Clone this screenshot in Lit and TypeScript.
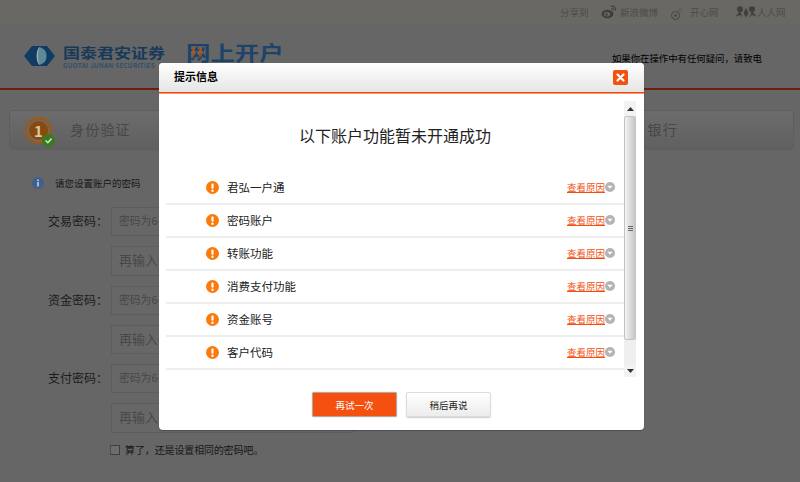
import { LitElement, html, css } from "lit";
import { customElement } from "lit/decorators.js";

const ROWS = ["君弘一户通", "密码账户", "转账功能", "消费支付功能", "资金账号", "客户代码"];
const FIELDS = ["交易密码：", "资金密码：", "支付密码："];

@customElement("app-root")
export class AppRoot extends LitElement {
  static styles = css`
    :host { display: block; width: 800px; height: 482px; position: relative; overflow: hidden; background: #666;
      font-family: "Noto Sans CJK SC", "Liberation Sans", sans-serif; color: #000; }
    .top { height: 24px; background: #6a6863; display: flex; align-items: center; font-size: 9.5px; color: #4c4c4a; padding-left: 560px; }
    .top span { white-space: nowrap; }
    .top svg { display: block; flex: none; }
    .share { width: 41px; }
    .wb { margin-right: 3px; }
    .wbt { width: 51px; }
    .kx { margin-right: 8px; margin-top: 3px; }
    .kxt { width: 45px; }
    .head { border-bottom: 2px solid #6e1d0e; display: flex; height: 63px; margin-top: 1px; }
    .logo { margin: 21px 0 0 24px; flex: none; }
    .brand { margin: 20px 0 0 8px; width: 123px; flex: none; color: #17395a; }
    .brand b { display: block; font-size: 13.6px; line-height: 15px; font-weight: 700; white-space: nowrap; transform: scaleX(1.25); transform-origin: left center; }
    .brand i { display: block; font-style: normal; font-size: 6.3px; line-height: 7px; margin-top: 2px; font-weight: 700; white-space: nowrap; letter-spacing: .3px; color: #2f4f6b; }
    .kaihu { margin: 15px 0 0 0; font-size: 20px; line-height: 26px; font-weight: 700; color: #1d4369; flex: none; position: relative; white-space: nowrap; transform: scaleX(1.22); transform-origin: left center; }
    .bolt { position: absolute; left: 3px; top: 4px; }
    .help { margin: 27px 0 0 auto; padding-right: 38px; font-size: 9.4px; line-height: 12px; white-space: nowrap; }
    .steps { margin: 20px 6px 0 9px; height: 40px; box-sizing: border-box; border: 1px solid #5e5e5e; border-radius: 4px; background: linear-gradient(#6c6c6c, #606060); display: flex; align-items: center; justify-content: space-between; padding: 0 115px 2px 15px; }
    .step { display: flex; align-items: center; font-size: 14px; letter-spacing: 1.2px; color: #474747; white-space: nowrap; }
    .num { width: 23px; height: 23px; border: 2px solid #a7560c; border-radius: 50%; background: #8a4a0c; display: flex; align-items: center; justify-content: center; color: #d6c8a8; font-size: 15px; font-weight: 700; margin-right: 18px; position: relative; letter-spacing: 0; box-shadow: inset 0 0 0 2px #6b6b6b; margin-top: 2px; }
    .ok { position: absolute; right: -5px; bottom: -5px; }
    .info { display: flex; align-items: center; font-size: 9.5px; line-height: 12px; margin: 27px 0 0 32px; color: #161616; white-space: nowrap; }
    .info svg { margin-right: 11px; }
    .form { margin: 18px 0 0 48px; display: grid; grid-template-columns: 63px 242px; row-gap: 10px; }
    .lab { font-size: 12px; line-height: 27px; color: #1b1b1b; white-space: nowrap; }
    .inp { height: 29.3px; box-sizing: border-box; border: 1px solid #5c5c5c; background: #676767; padding-left: 7px; color: #484848; line-height: 25px; white-space: nowrap; grid-column: 2; font-size: 13px; }
    .inp.first { font-size: 10.8px; }
    .chk { display: flex; align-items: center; margin: 11px 0 0 110px; font-size: 9.9px; line-height: 11px; color: #161616; white-space: nowrap; }
    .chk span { margin-top: 1px; }
    .box { width: 8px; height: 8px; border: 1px solid #3e3e3e; border-left-color: #5a4a38; margin-right: 5px; background: #6d6d6d; }
    .modal { position: absolute; left: 159px; top: 63px; width: 485px; height: 367px; background: #fff; border-radius: 4px; display: flex; flex-direction: column; overflow: hidden; box-shadow: 0 1px 1px rgba(0,0,0,.25); }
    .title { height: 30px; flex: none; box-sizing: border-box; background: linear-gradient(#fff, #e5e5e5); border-bottom: 1px solid #f0440a; display: flex; align-items: center; justify-content: space-between; padding: 0 16px 3px 15px; font-size: 11px; font-weight: 700; }
    .close { width: 15px; height: 15px; border-radius: 2px; background: #f4500f; display: flex; align-items: center; justify-content: center; margin-top: 3px; }
    .rule { height: 1px; background: #fb9a70; flex: none; }
    .body { margin: 7px 8px 0 7px; height: 276px; display: flex; flex: none; }
    .list { flex: 1; min-width: 0; }
    h2 { margin: 0; height: 71px; box-sizing: border-box; padding-top: 21px; font-size: 16px; line-height: 26px; font-weight: 400; color: #222; text-align: center; }
    .row { height: 33px; box-sizing: border-box; border-bottom: 2px solid #eeeeee; display: flex; align-items: center; padding: 0 9px 2px 40px; font-size: 11.5px; color: #222; }
    .warn { margin: 2px 8px 0 0; flex: none; }
    .name { flex: 1; }
    .link { color: #f0500f; font-size: 9.5px; text-decoration: underline; white-space: nowrap; }
    .bar { width: 12px; flex: none; background: #efefef; display: flex; flex-direction: column; }
    .arrow { height: 15px; flex: none; display: flex; align-items: center; justify-content: center; background: #f3f3f3; }
    .arrow.end { height: 12px; }
    .thumb { height: 224px; flex: none; box-sizing: border-box; border: 1px solid #c4c4c4; border-radius: 2px; background: linear-gradient(90deg, #f4f4f4, #c6c6c6); display: flex; align-items: center; justify-content: center; }
    .grip { width: 5px; height: 5px; background: repeating-linear-gradient(#666 0 1px, transparent 1px 2px); }
    .track { flex: 1; }
    .foot { display: flex; justify-content: center; gap: 9px; margin-top: 15px; }
    button { width: 85px; height: 25px; box-sizing: border-box; font: inherit; font-size: 9.5px; border-radius: 2px; padding: 0; }
    .pri { background: #f4500f; color: #fff; border: 1px solid #b9a79c; box-shadow: 0 0 1px #888; }
    .sec { background: linear-gradient(#fff, #ececec); color: #222; border: 1px solid #dcdcdc; box-shadow: 0 1px 1px #ccc; }
  `;

  private warn() {
    return html`<svg class="warn" width="13" height="13" viewBox="0 0 13 13"><circle cx="6.5" cy="6.5" r="6.5" fill="#fb7a0c"/><rect x="5.4" y="2.4" width="2.2" height="5.4" rx="1" fill="#fff"/><circle cx="6.5" cy="9.7" r="1.2" fill="#fff"/></svg>`;
  }
  private down() {
    return html`<svg width="10" height="10" viewBox="0 0 10 10"><circle cx="5" cy="5" r="5" fill="#b4b4b4"/><path d="M2.4 3.8h5.2L5 6.8z" fill="#fff"/></svg>`;
  }

  render() {
    return html`
      <div class="top">
        <span class="share">分享到</span>
        <svg class="wb" width="16" height="14" viewBox="0 0 16 14"><ellipse cx="6.5" cy="9" rx="6" ry="4.2" fill="#3e3e3c"/><ellipse cx="6" cy="9.3" rx="3" ry="2.2" fill="#6a6863"/><circle cx="5.6" cy="9.5" r="1.2" fill="#3e3e3c"/><path d="M10 1.4c3-.8 5 1.4 4.5 4.3M10.4 3.6c1.4-.3 2.2.6 2 1.9" fill="none" stroke="#3e3e3c" stroke-width="1.2"/></svg>
        <span class="wbt">新浪微博</span>
        <svg class="kx" width="11" height="14" viewBox="0 0 11 14"><circle cx="4.5" cy="8.5" r="4" fill="none" stroke="#444" stroke-width="1"/><circle cx="4.5" cy="8.5" r="1.3" fill="#444"/><circle cx="9" cy="3" r="1.5" fill="none" stroke="#555" stroke-width=".7"/></svg>
        <span class="kxt">开心网</span>
        <svg width="22" height="12" viewBox="0 0 22 12"><circle cx="5" cy="3.2" r="3" fill="#3f3f3d"/><circle cx="17" cy="3.200" r="3" fill="#3f3f3d"/><path d="M5 5 .5 10.500 5 9l2.500 2.500zM17 5l4.500 5.500L17 9l-2.500 2.500zM11 2l2.500 5L11 11.500 8.500 7z" fill="#3f3f3d"/></svg>
        <span>人人网</span>
      </div>
      <div class="head">
        <svg class="logo" width="31" height="20" viewBox="0 0 31 20"><path d="M8 0h15l8 10-8 10H8L0 10z" fill="#103b62"/><path d="M15.500 1c-4 3-4 15 0 18 5-2 7-4 7-9s-2-7-7-9z" fill="#5d8a99"/><path d="M15.500 1c-3.500 3-3.500 15 0 18-1.800-4-1.800-14 0-18z" fill="#a9a9a9"/></svg>
        <div class="brand"><b>国泰君安证券</b><i>GUOTAI JUNAN SECURITIES</i></div>
        <div class="kaihu">网上开户<svg class="bolt" width="15" height="18" viewBox="0 0 18 20"><path d="M5 1 1 10h3l-2 8 5-10H4.500zM12 1 8 10h3l-2 8 5-10h-2.500z" fill="#b5541c"/></svg></div>
        <div class="help">如果你在操作中有任何疑问，请致电</div>
      </div>
      <div class="steps">
        <div class="step"><span class="num">1<svg class="ok" width="13" height="13" viewBox="0 0 13 13"><circle cx="6.500" cy="6.500" r="6.500" fill="#3a7a1e"/><path d="M3.600 6.500 5.800 8.700 9.500 4.600" fill="none" stroke="#cfe3c2" stroke-width="1.600"/></svg></span>身份验证</div>
        <div class="step">银行</div>
      </div>
      <div class="info"><svg width="12" height="12" viewBox="0 0 12 12"><circle cx="6" cy="6" r="6" fill="#3f5f8f"/><circle cx="6" cy="3.200" r="1" fill="#b8c4d4"/><rect x="5.100" y="5" width="1.800" height="4.500" fill="#b8c4d4"/></svg>请您设置账户的密码</div>
      <div class="form">
        ${FIELDS.map((f) => html`
          <div class="lab">${f}</div><div class="inp first">密码为6-8位数字</div>
          <div class="inp">再输入一次</div>`)}
      </div>
      <div class="chk"><i class="box"></i><span>算了，还是设置相同的密码吧。</span></div>
      <div class="modal">
        <div class="title">提示信息<span class="close"><svg width="9" height="9" viewBox="0 0 9 9"><path d="M1.500 1.500l6 6M7.500 1.500l-6 6" stroke="#fff" stroke-width="2.200" stroke-linecap="round"/></svg></span></div>
        <div class="rule"></div>
        <div class="body">
          <div class="list">
            <h2>以下账户功能暂未开通成功</h2>
            ${ROWS.map((r) => html`<div class="row">${this.warn()}<span class="name">${r}</span><span class="link">查看原因</span>${this.down()}</div>`)}
          </div>
          <div class="bar">
            <div class="arrow"><svg width="7" height="4" viewBox="0 0 7 4"><path d="M0 4h7L3.500 0z" fill="#333"/></svg></div>
            <div class="thumb"><span class="grip"></span></div>
            <div class="track"></div>
            <div class="arrow end"><svg width="7" height="4" viewBox="0 0 7 4"><path d="M0 0h7L3.500 4z" fill="#333"/></svg></div>
          </div>
        </div>
        <div class="foot"><button class="pri">再试一次</button><button class="sec">稍后再说</button></div>
      </div>
    `;
  }
}
